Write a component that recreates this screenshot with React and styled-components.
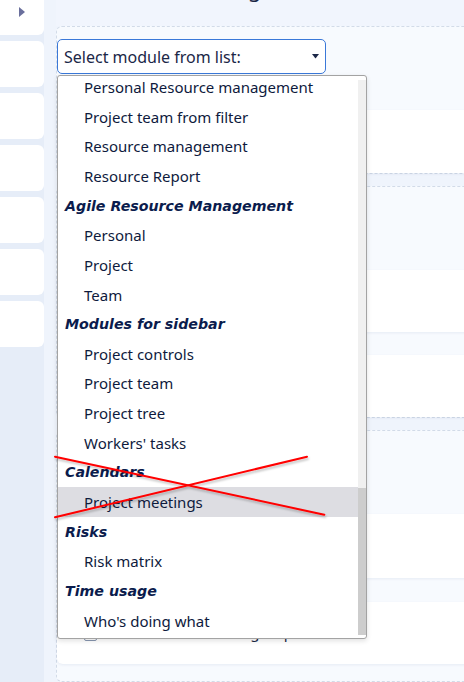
import React from "react";
import styled, { createGlobalStyle } from "styled-components";

const GlobalStyle = createGlobalStyle`
  html, body { margin: 0; padding: 0; }
  body {
    background: #eff4fc;
    font-family: "Noto Sans", "DejaVu Sans", sans-serif;
    overflow: hidden;
  }
`;

const Page = styled.div`
  position: relative;
  display: flex;
  width: 464px;
  height: 682px;
  overflow: hidden;
  background: #eff4fc;
`;

const Sidebar = styled.div`
  width: 44px;
  flex: none;
  display: flex;
  flex-direction: column;
  gap: 6px;
  margin-top: -11px;
  background: #e6edf8;
`;

const SideCard = styled.div`
  height: 46px;
  background: #ffffff;
  border-radius: 0 6px 6px 0;
  display: flex;
  align-items: center;
  justify-content: center;
`;

const Main = styled.div`
  flex: 1;
  min-width: 0;
  margin-left: 12px;
  margin-right: -24px;
  display: flex;
  flex-direction: column;
  gap: 12px;
`;

const TopBar = styled.div`
  height: 26px;
  margin-bottom: -12px;
  background: #f1f5fd;
  padding-left: 132px;
`;

const PageTitle = styled.h1`
  margin: -25px 0 0 0;
  font-size: 22px;
  line-height: 26px;
  font-weight: 400;
  color: #1b2747;
`;

const Panel = styled.section`
  border: 1px dashed #d2dbe8;
  border-radius: 6px;
  background: #f7fafe;
  display: flex;
  flex-direction: column;
  padding-top: ${(p) => (p.$pad ? `${p.$pad}px` : "0")};
  flex: ${(p) => (p.$grow ? "1" : "none")};
`;

const PanelHead = styled.div`
  height: ${(p) => p.$h}px;
`;

const Card = styled.div`
  height: ${(p) => p.$h}px;
  margin-top: ${(p) => p.$mt || 0}px;
  background: #ffffff;
  border-radius: 6px;
  box-shadow: 0 1px 3px rgba(40, 70, 130, 0.08);
  display: flex;
  align-items: center;
  padding-left: 27px;
`;

const CheckRow = styled.label`
  display: flex;
  align-items: center;
  gap: 6px;
  font-size: 15px;
  line-height: 20px;
  color: #1b2747;
  margin-top: -2px;
`;

const CheckBox = styled.span`
  width: 11px;
  height: 11px;
  margin-top: 4px;
  border: 1px solid #8796b0;
  border-radius: 2px;
  background: #fff;
`;

const SelectWrap = styled.div`
  position: relative;
  width: 269px;
  margin-bottom: 36px;
`;

const SelectBox = styled.div`
  height: 35px;
  box-sizing: border-box;
  border: 1px solid #3a78d8;
  border-radius: 5px;
  background: #ffffff;
  display: flex;
  align-items: center;
  justify-content: space-between;
  padding: 0 6px;
  font-size: 16px;
  color: #1b2747;
`;

const Caret = styled.svg`
  width: 7px;
  height: 5px;
`;

const Dropdown = styled.div`
  position: absolute;
  top: 36px;
  left: 0;
  width: 310px;
  height: 564px;
  box-sizing: border-box;
  border: 1px solid #a3a3a3;
  border-radius: 3px;
  background: #ffffff;
  box-shadow: 0 2px 5px rgba(0, 0, 0, 0.12);
  display: flex;
  overflow: hidden;
  z-index: 5;
`;

const List = styled.ul`
  flex: 1;
  margin: 0;
  padding: 0;
  list-style: none;
  overflow: hidden;
`;

const Inner = styled.div`
  margin-top: -3.8px;
`;

const Row = styled.li`
  height: 29.65px;
  display: flex;
  align-items: center;
  white-space: nowrap;
  padding-left: ${(p) => (p.$group ? "7px" : "26px")};
  font-family: ${(p) =>
    p.$group ? '"DejaVu Sans", "Noto Sans", sans-serif' : '"Noto Sans", "DejaVu Sans", sans-serif'};
  font-size: ${(p) => (p.$group ? "14.2px" : "15px")};
  color: ${(p) => (p.$group ? "#0b1c4d" : "#0e1a3d")};
  font-weight: ${(p) => (p.$group ? 700 : 400)};
  font-style: ${(p) => (p.$group ? "italic" : "normal")};
  background: ${(p) => (p.$active ? "#dddde2" : "transparent")};
`;

const ScrollTrack = styled.div`
  width: 8px;
  flex: none;
  padding: 4px 0 3px;
  display: flex;
  flex-direction: column;
`;

const TrackFill = styled.div`
  flex: 1;
  background: #f0f0f0;
  display: flex;
  flex-direction: column;
  justify-content: flex-end;
`;

const Thumb = styled.div`
  height: 147px;
  background: #cdcdcd;
`;

const Overlay = styled.svg`
  position: absolute;
  left: 0;
  top: 0;
  width: 464px;
  height: 682px;
  pointer-events: none;
  z-index: 10;
`;

const options = [
  { label: "Personal Resource management" },
  { label: "Project team from filter" },
  { label: "Resource management" },
  { label: "Resource Report" },
  { label: "Agile Resource Management", group: true },
  { label: "Personal" },
  { label: "Project" },
  { label: "Team" },
  { label: "Modules for sidebar", group: true },
  { label: "Project controls" },
  { label: "Project team" },
  { label: "Project tree" },
  { label: "Workers' tasks" },
  { label: "Calendars", group: true },
  { label: "Project meetings", active: true },
  { label: "Risks", group: true },
  { label: "Risk matrix" },
  { label: "Time usage", group: true },
  { label: "Who's doing what" },
];

export default function App() {
  return (
    <Page>
      <GlobalStyle />
      <Sidebar>
        <SideCard>
          <svg width="6" height="10" viewBox="0 0 6 10">
            <path d="M0 0 L6 5 L0 10 Z" fill="#6a6f9c" />
          </svg>
        </SideCard>
        {[0, 1, 2, 3, 4, 5].map((i) => (
          <SideCard key={i} />
        ))}
      </Sidebar>
      <Main>
        <TopBar>
          <PageTitle>Settings</PageTitle>
        </TopBar>
        <Panel $pad={12}>
          <SelectWrap>
            <SelectBox>
              <span>Select module from list:</span>
              <Caret viewBox="0 0 7 5">
                <path d="M0 0 L7 0 L3.5 4.5 Z" fill="#1b2747" />
              </Caret>
            </SelectBox>
            <Dropdown>
              <List>
                <Inner>
                  {options.map((o) => (
                    <Row key={o.label} $group={o.group} $active={o.active}>
                      {o.label}
                    </Row>
                  ))}
                </Inner>
              </List>
              <ScrollTrack>
                <TrackFill>
                  <Thumb />
                </TrackFill>
              </ScrollTrack>
            </Dropdown>
          </SelectWrap>
          <Card $h={63} />
        </Panel>
        <Panel>
          <PanelHead $h={83} />
          <Card $h={62} />
          <Card $h={62} $mt={23} />
        </Panel>
        <Panel $grow>
          <PanelHead $h={83} />
          <Card $h={64} />
          <Card $h={62} $mt={24}>
            <CheckRow>
              <CheckBox />
              Show all tasks of the group
            </CheckRow>
          </Card>
        </Panel>
      </Main>
      <Overlay viewBox="0 0 464 682">
        <defs>
          <filter id="sh" x="-10%" y="-50%" width="120%" height="200%">
            <feDropShadow dx="1" dy="2" stdDeviation="1.2" floodColor="#000" floodOpacity="0.25" />
          </filter>
        </defs>
        <g filter="url(#sh)" stroke="#ff0000" strokeWidth="2" strokeLinecap="round">
          <line x1="55" y1="456.7" x2="324.3" y2="514.7" />
          <line x1="55" y1="517.3" x2="307" y2="456.7" />
        </g>
      </Overlay>
    </Page>
  );
}
